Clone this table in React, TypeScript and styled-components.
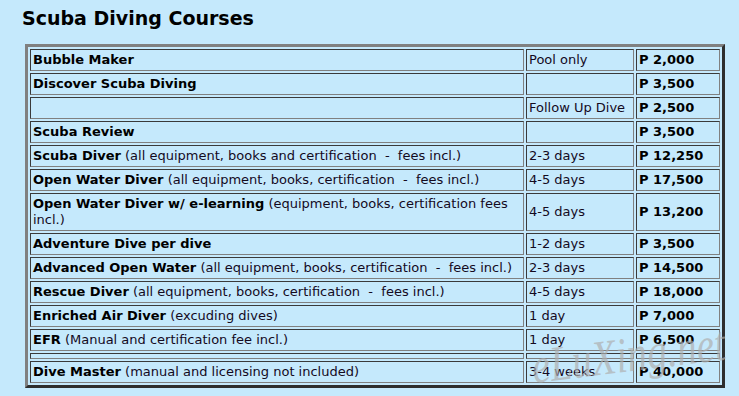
import React from "react";
import styled, { createGlobalStyle } from "styled-components";

const GlobalStyle = createGlobalStyle`
  html, body {
    margin: 0;
    padding: 0;
    background: #c5e9fc;
  }
  body {
    font-family: "DejaVu Sans", Verdana, sans-serif;
    color: #000;
  }
`;

const Page = styled.div`
  position: relative;
  width: 739px;
  height: 396px;
  overflow: hidden;
  background: #c5e9fc;
  padding-top: 7px;
  box-sizing: border-box;
`;

const Title = styled.h1`
  margin: 0 0 15px 22px;
  font-family: "DejaVu Sans", Verdana, sans-serif;
  font-size: 19px;
  line-height: 22px;
  font-weight: bold;
  color: #000;
`;

const Table = styled.table`
  margin-left: 25px;
  width: 700px;
  table-layout: fixed;
  border-collapse: separate;
  border-spacing: 2px;
  border-style: solid;
  border-width: 3px;
  border-color: #808080 #2e2e2e #2e2e2e #808080;
  font-family: "DejaVu Sans", Verdana, sans-serif;
  font-size: 13px;
  line-height: 16px;
`;

const Cell = styled.td<{ $bold?: boolean }>`
  border-style: solid;
  border-width: 1px;
  border-color: #3a3a3a #808080 #808080 #3a3a3a;
  padding: 2px;
  vertical-align: middle;
  font-weight: ${(p) => (p.$bold ? "bold" : "normal")};
  color: ${(p) => (p.$bold ? "#000" : "#140a1e")};
  white-space: normal;
`;

const Name = styled.b`
  font-weight: bold;
  color: #000;
`;

const Watermark = styled.div`
  position: absolute;
  left: 535px;
  top: 341px;
  font-family: "Liberation Serif", serif;
  font-style: italic;
  font-size: 50px;
  line-height: 50px;
  color: rgba(175, 175, 175, 0.7);
  transform: rotate(-7deg) scaleX(0.8);
  transform-origin: left bottom;
  pointer-events: none;
  white-space: nowrap;
`;

type Row = { name?: string; note?: string; dur?: string; price?: string };

const D = "\u00a0 - \u00a0";

const rows: Row[] = [
  { name: "Bubble Maker", dur: "Pool only", price: "P 2,000" },
  { name: "Discover Scuba Diving", price: "P 3,500" },
  { dur: "Follow Up Dive", price: "P 2,500" },
  { name: "Scuba Review", price: "P 3,500" },
  {
    name: "Scuba Diver",
    note: ` (all equipment, books and certification${D}fees incl.)`,
    dur: "2-3 days",
    price: "P 12,250",
  },
  {
    name: "Open Water Diver",
    note: ` (all equipment, books, certification${D}fees incl.)`,
    dur: "4-5 days",
    price: "P 17,500",
  },
  {
    name: "Open Water Diver w/ e-learning",
    note: " (equipment, books, certification fees incl.)",
    dur: "4-5 days",
    price: "P 13,200",
  },
  { name: "Adventure Dive per dive", dur: "1-2 days", price: "P 3,500" },
  {
    name: "Advanced Open Water",
    note: ` (all equipment, books, certification${D}fees incl.)`,
    dur: "2-3 days",
    price: "P 14,500",
  },
  {
    name: "Rescue Diver",
    note: ` (all equipment, books, certification${D}fees incl.)`,
    dur: "4-5 days",
    price: "P 18,000",
  },
  {
    name: "Enriched Air Diver",
    note: " (excuding dives)",
    dur: "1 day",
    price: "P 7,000",
  },
  {
    name: "EFR",
    note: " (Manual and certification fee incl.)",
    dur: "1 day",
    price: "P 6,500",
  },
  {},
  {
    name: "Dive Master",
    note: " (manual and licensing not included)",
    dur: "3-4 weeks",
    price: "P 40,000",
  },
];

export default function App() {
  return (
    <>
      <GlobalStyle />
      <Page>
        <Title>Scuba Diving Courses</Title>
        <Table>
          <colgroup>
            <col style={{ width: 494 }} />
            <col style={{ width: 108 }} />
            <col style={{ width: 84 }} />
          </colgroup>
          <tbody>
            {rows.map((r, i) => (
              <tr key={i}>
                <Cell>
                  {r.name && <Name>{r.name}</Name>}
                  {r.note}
                </Cell>
                <Cell>{r.dur}</Cell>
                <Cell $bold>{r.price}</Cell>
              </tr>
            ))}
          </tbody>
        </Table>
        <Watermark>eLuXing.net</Watermark>
      </Page>
    </>
  );
}
